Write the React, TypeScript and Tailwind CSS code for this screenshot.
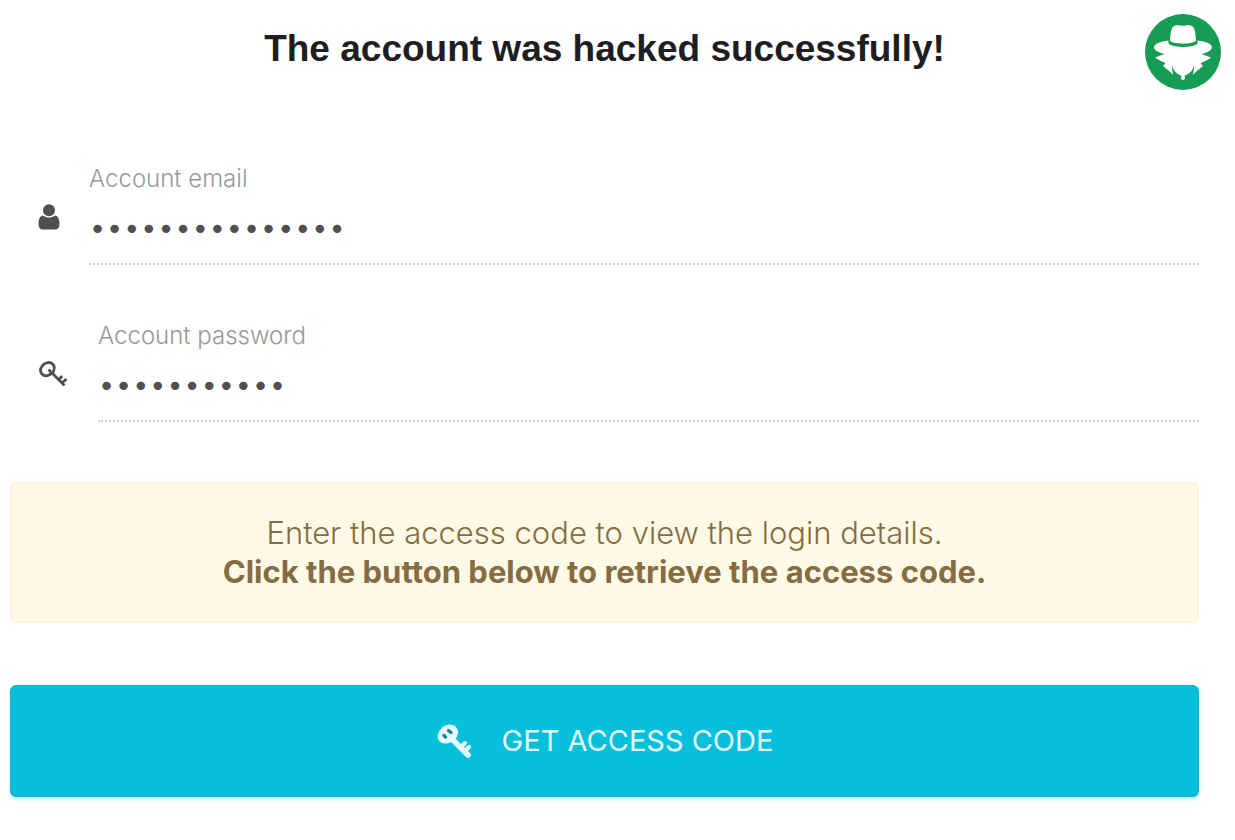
import { useState } from 'react'

function SpyLogo() {
  return (
    <svg viewBox="0 0 76 76" className="h-[76px] w-[76px]" aria-hidden="true">
      <circle cx="38" cy="38" r="38" fill="#169c55" />
      <g fill="#ffffff">
        <path d="M25 27C25.300 20 26 15.500 28 12.800C30.500 10.800 34.500 11.200 38 11.800C41.500 11.200 45.500 10.800 48 12.800C50 15.500 50.700 20 51 27C46 30.500 30 30.500 25 27Z" />
        <path d="M23.500 26.500C15 27.500 9 30 9 33.500C9.500 36.500 13.500 38.500 19.500 40L10 43.500C13.500 46 17 48 20.500 49L18 52C21.500 54.500 25 57.500 28.500 61C27.300 58 26.800 54.500 27 51.500C28 56 31.500 60 36 61.500H40C44.500 60 48 56 49 51.500C49.200 54.500 48.700 58 47.500 61C51 57.500 54.500 54.500 58 52L55.500 49C59 48 62.500 46 66 43.500L56.500 40C62.500 38.500 66.500 36.500 67 33.500C67 30 61 27.500 52.500 26.500V30C46 34 30 34 23.500 30Z" />
        <path d="M36.500 60H39.500L40 64.500Q38 67.500 36 64.500Z" />
      </g>
    </svg>
  )
}

function UserIcon() {
  return (
    <svg viewBox="0 0 22 26" className="h-[26px] w-[22px]" fill="#4f4f4f" aria-hidden="true">
      <circle cx="11" cy="6.200" r="6" />
      <path d="M5.200 11.500C2 12 0.500 15 0.500 20C0.500 23.500 2 25.500 5 25.500H17C20 25.500 21.500 23.500 21.500 20C21.500 15 20 12 16.800 11.500C13.500 14.200 8.500 14.200 5.200 11.500Z" />
    </svg>
  )
}

function KeyIcon() {
  return (
    <svg viewBox="0 0 30 28" className="h-7 w-[30px]" fill="none" stroke="currentColor" aria-hidden="true">
      <path
        d="M4.500 5.500C7.500 2 12.500 1.500 15 4.500C17 7 16.500 10.500 14 13C11 16 6.500 17 4 14C2 11.500 2.500 8 4.500 5.500Z"
        strokeWidth="2.800"
      />
      <path d="M10.500 9.500L26.500 25.500M21 19.500L24 16M24.500 22.500L28.500 19" strokeWidth="2.800" />
    </svg>
  )
}

function BoldKeyIcon() {
  return (
    <svg viewBox="0 0 36 36" className="h-9 w-9" fill="none" stroke="currentColor" aria-hidden="true">
      <path
        d="M6 7C9 2.500 15.500 2 18.500 4.500C21.500 7.500 21 12.500 17.500 16C14 19.500 8 20 5 17.500C2 15 3 10.500 6 7Z"
        fill="currentColor"
        strokeWidth="3"
        strokeLinejoin="round"
      />
      <path d="M16 16L32 32" strokeWidth="5.500" strokeLinecap="round" />
      <path d="M25 24L29 20M29 28L33 24" strokeWidth="4" strokeLinecap="round" />
      <path d="M12.500 7.500L15 9.500M8 12.500L9.500 14" stroke="#1a8795" strokeWidth="3.500" strokeLinecap="round" />
    </svg>
  )
}

export default function App() {
  const [email, setEmail] = useState('account@mail.co')
  const [password, setPassword] = useState('accesscode1')

  return (
    <main className="relative min-h-screen bg-white pr-[36px] pb-10 pl-[10px] font-['Inter',sans-serif]">
      <div className="absolute top-[14px] right-[14px]">
        <SpyLogo />
      </div>

      {/* Header */}
      <h1 className="pt-[25px] text-center font-['Liberation_Sans',sans-serif] text-[37px] leading-[48px] font-bold text-[#1e1e22]">
        The account was hacked successfully!
      </h1>

      {/* Account details */}
      <form onSubmit={(e) => e.preventDefault()}>
        <div className="mt-[92px] flex items-center">
          <div className="w-[79px] pt-1 pl-7">
            <UserIcon />
          </div>
          <div className="flex-1 border-b-2 border-dotted border-[#d2d2d2]">
            <label htmlFor="email" className="block text-2xl leading-7 font-light text-[#999999]">
              Account email
            </label>
            <input
              id="email"
              type="password"
              value={email}
              onChange={(e) => setEmail(e.target.value)}
              className="block h-[70px] w-full pt-0.5 font-['DejaVu_Sans',sans-serif] text-[29px] text-[#505050] outline-none"
            />
          </div>
        </div>

        <div className="mt-[57px] flex items-center">
          <div className="w-[88px] pt-1 pl-7 text-[#505050]">
            <KeyIcon />
          </div>
          <div className="flex-1 border-b-2 border-dotted border-[#d2d2d2]">
            <label htmlFor="password" className="block text-2xl leading-7 font-light text-[#999999]">
              Account password
            </label>
            <input
              id="password"
              type="password"
              value={password}
              onChange={(e) => setPassword(e.target.value)}
              className="block h-[70px] w-full pt-0.5 font-['DejaVu_Sans',sans-serif] text-[29px] text-[#505050] outline-none"
            />
          </div>
        </div>

        {/* Notice */}
        <div className="mt-[60px] rounded-md border-2 border-[#fbf3dc] bg-[#fffae6] pt-[29px] pb-[30px] text-center text-[31px] leading-[39px] text-[#866c42]">
          <p className="font-light">Enter the access code to view the login details.</p>
          <p className="font-bold">Click the button below to retrieve the access code.</p>
        </div>

        <button
          type="submit"
          className="mt-[62px] flex h-28 w-full items-center justify-center gap-[30px] rounded-md border-2 border-[#10b6ce] bg-[#05bfdb] text-[29px] text-[#e4fcff] shadow-[0_2px_4px_#b5f5fb]"
        >
          <BoldKeyIcon />
          GET ACCESS CODE
        </button>
      </form>
    </main>
  )
}
